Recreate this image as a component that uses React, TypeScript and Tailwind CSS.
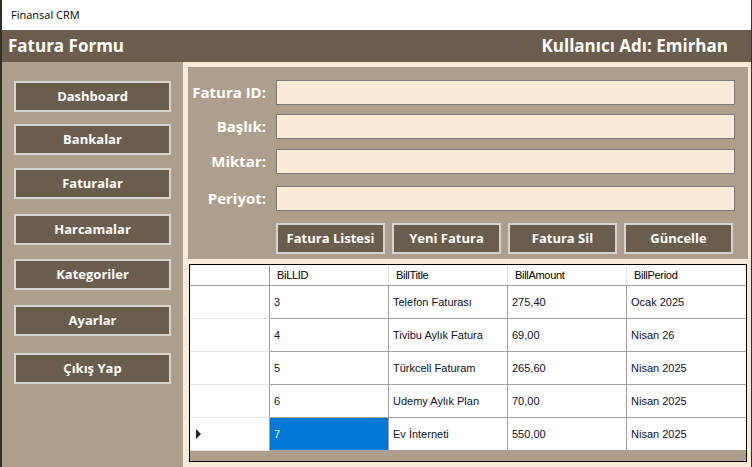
import React from "react";

const BROWN = "bg-[#6b5d4e]";

function SideButton({ label, mt }: { label: string; mt: string }) {
  return (
    <div
      className={`${mt} w-[157px] h-[31px] ${BROWN} border-2 border-[#d4d4d4] flex items-center justify-center text-white font-bold text-[13px]`}
    >
      {label}
    </div>
  );
}

function Field({ label, mt }: { label: string; mt: string }) {
  return (
    <div className={`${mt} flex items-center`}>
      <div className="w-[78px] text-right text-white font-bold text-[15px] leading-none">{label}</div>
      <div className="ml-[10px] w-[459px] h-[25px] bg-[#faebd7] border border-[#7a7a7a]" />
    </div>
  );
}

function ActionButton({ label }: { label: string }) {
  return (
    <div
      className={`w-[109px] h-[31px] ${BROWN} border-2 border-[#d4d4d4] flex items-center justify-center text-white font-bold text-[13px]`}
    >
      {label}
    </div>
  );
}

const rows = [
  ["3", "Telefon Faturası", "275,40", "Ocak 2025"],
  ["4", "Tivibu Aylık Fatura", "69,00", "Nisan 26"],
  ["5", "Türkcell Faturam", "265,60", "Nisan 2025"],
  ["6", "Udemy Aylık Plan", "70,00", "Nisan 2025"],
  ["7", "Ev İnterneti", "550,00", "Nisan 2025"],
];

export default function App() {
  return (
    <div
      className="w-[752px] h-[467px] flex flex-col border-l-2 border-r border-[#2a3324] overflow-hidden"
      style={{ fontFamily: '"Open Sans", "Noto Sans", sans-serif' }}
    >
      <div className="h-[30px] bg-white flex items-center pl-[9px] text-[11px] text-black">Finansal CRM</div>
      <div className={`h-[32px] ${BROWN} flex items-center justify-between pl-[6px] pr-[23px] text-white font-bold text-[17px]`}>
        <span>Fatura Formu</span>
        <span>Kullanıcı Adı: Emirhan</span>
      </div>
      <div className="flex-1 flex">
        <div className="w-[181px] bg-[#ae9f8c] pl-[12px] flex flex-col">
          <SideButton label="Dashboard" mt="mt-[19px]" />
          <SideButton label="Bankalar" mt="mt-[12px]" />
          <SideButton label="Faturalar" mt="mt-[13px]" />
          <SideButton label="Harcamalar" mt="mt-[15px]" />
          <SideButton label="Kategoriler" mt="mt-[14px]" />
          <SideButton label="Ayarlar" mt="mt-[15px]" />
          <SideButton label="Çıkış Yap" mt="mt-[17px]" />
        </div>
        <div className="flex-1 bg-[#faebd7] pl-[5px] pr-[3px] pt-[5px] flex flex-col">
          <div className="h-[192px] bg-[#ae9f8c] flex flex-col">
            <Field label="Fatura ID:" mt="mt-[13px]" />
            <Field label="Başlık:" mt="mt-[9px]" />
            <Field label="Miktar:" mt="mt-[10px]" />
            <Field label="Periyot:" mt="mt-[12px]" />
            <div className="mt-[12px] ml-[88px] flex gap-[7px]">
              <ActionButton label="Fatura Listesi" />
              <ActionButton label="Yeni Fatura" />
              <ActionButton label="Fatura Sil" />
              <ActionButton label="Güncelle" />
            </div>
          </div>
          <div
            className="mt-[5px] ml-[1px] w-[558px] h-[198px] border border-black bg-[#ae9f8c] flex flex-col text-[11px] text-[#10102a]"
            style={{ fontFamily: '"Liberation Sans", Arial, sans-serif' }}
          >
            <div className="h-[21px] bg-white flex border-b border-[#a0a0a0] shrink-0">
              <div className="w-[80px] border-r border-[#a0a0a0]" />
              {["BiLLID", "BillTitle", "BillAmount", "BillPeriod"].map((h, i) => (
                <div
                  key={h}
                  className={`w-[119px] ${i < 3 ? "border-r border-[#e0e0e0]" : ""} pl-[7px] flex items-center tracking-[-0.3px] text-black`}
                >
                  {h}
                </div>
              ))}
            </div>
            {rows.map((r, ri) => (
              <div key={ri} className="h-[33px] flex shrink-0">
                <div className="w-[80px] bg-white border-r border-[#a0a0a0] border-b border-b-[#e3e3e3] flex items-center pl-[6px]">
                  {ri === 4 && (
                    <svg width="6" height="10" viewBox="0 0 6 10">
                      <path d="M0 0 L5 5 L0 10 Z" fill="#222" />
                    </svg>
                  )}
                </div>
                {r.map((c, ci) => {
                  const sel = ri === 4 && ci === 0;
                  return (
                    <div
                      key={ci}
                      className={`w-[119px] border-b border-[#a0a0a0] ${ci < 3 ? "border-r" : ""} flex items-center pl-[4px] ${
                        sel ? "bg-[#0078d7] text-white" : "bg-white"
                      }`}
                    >
                      {c}
                    </div>
                  );
                })}
              </div>
            ))}
          </div>
        </div>
      </div>
    </div>
  );
}
